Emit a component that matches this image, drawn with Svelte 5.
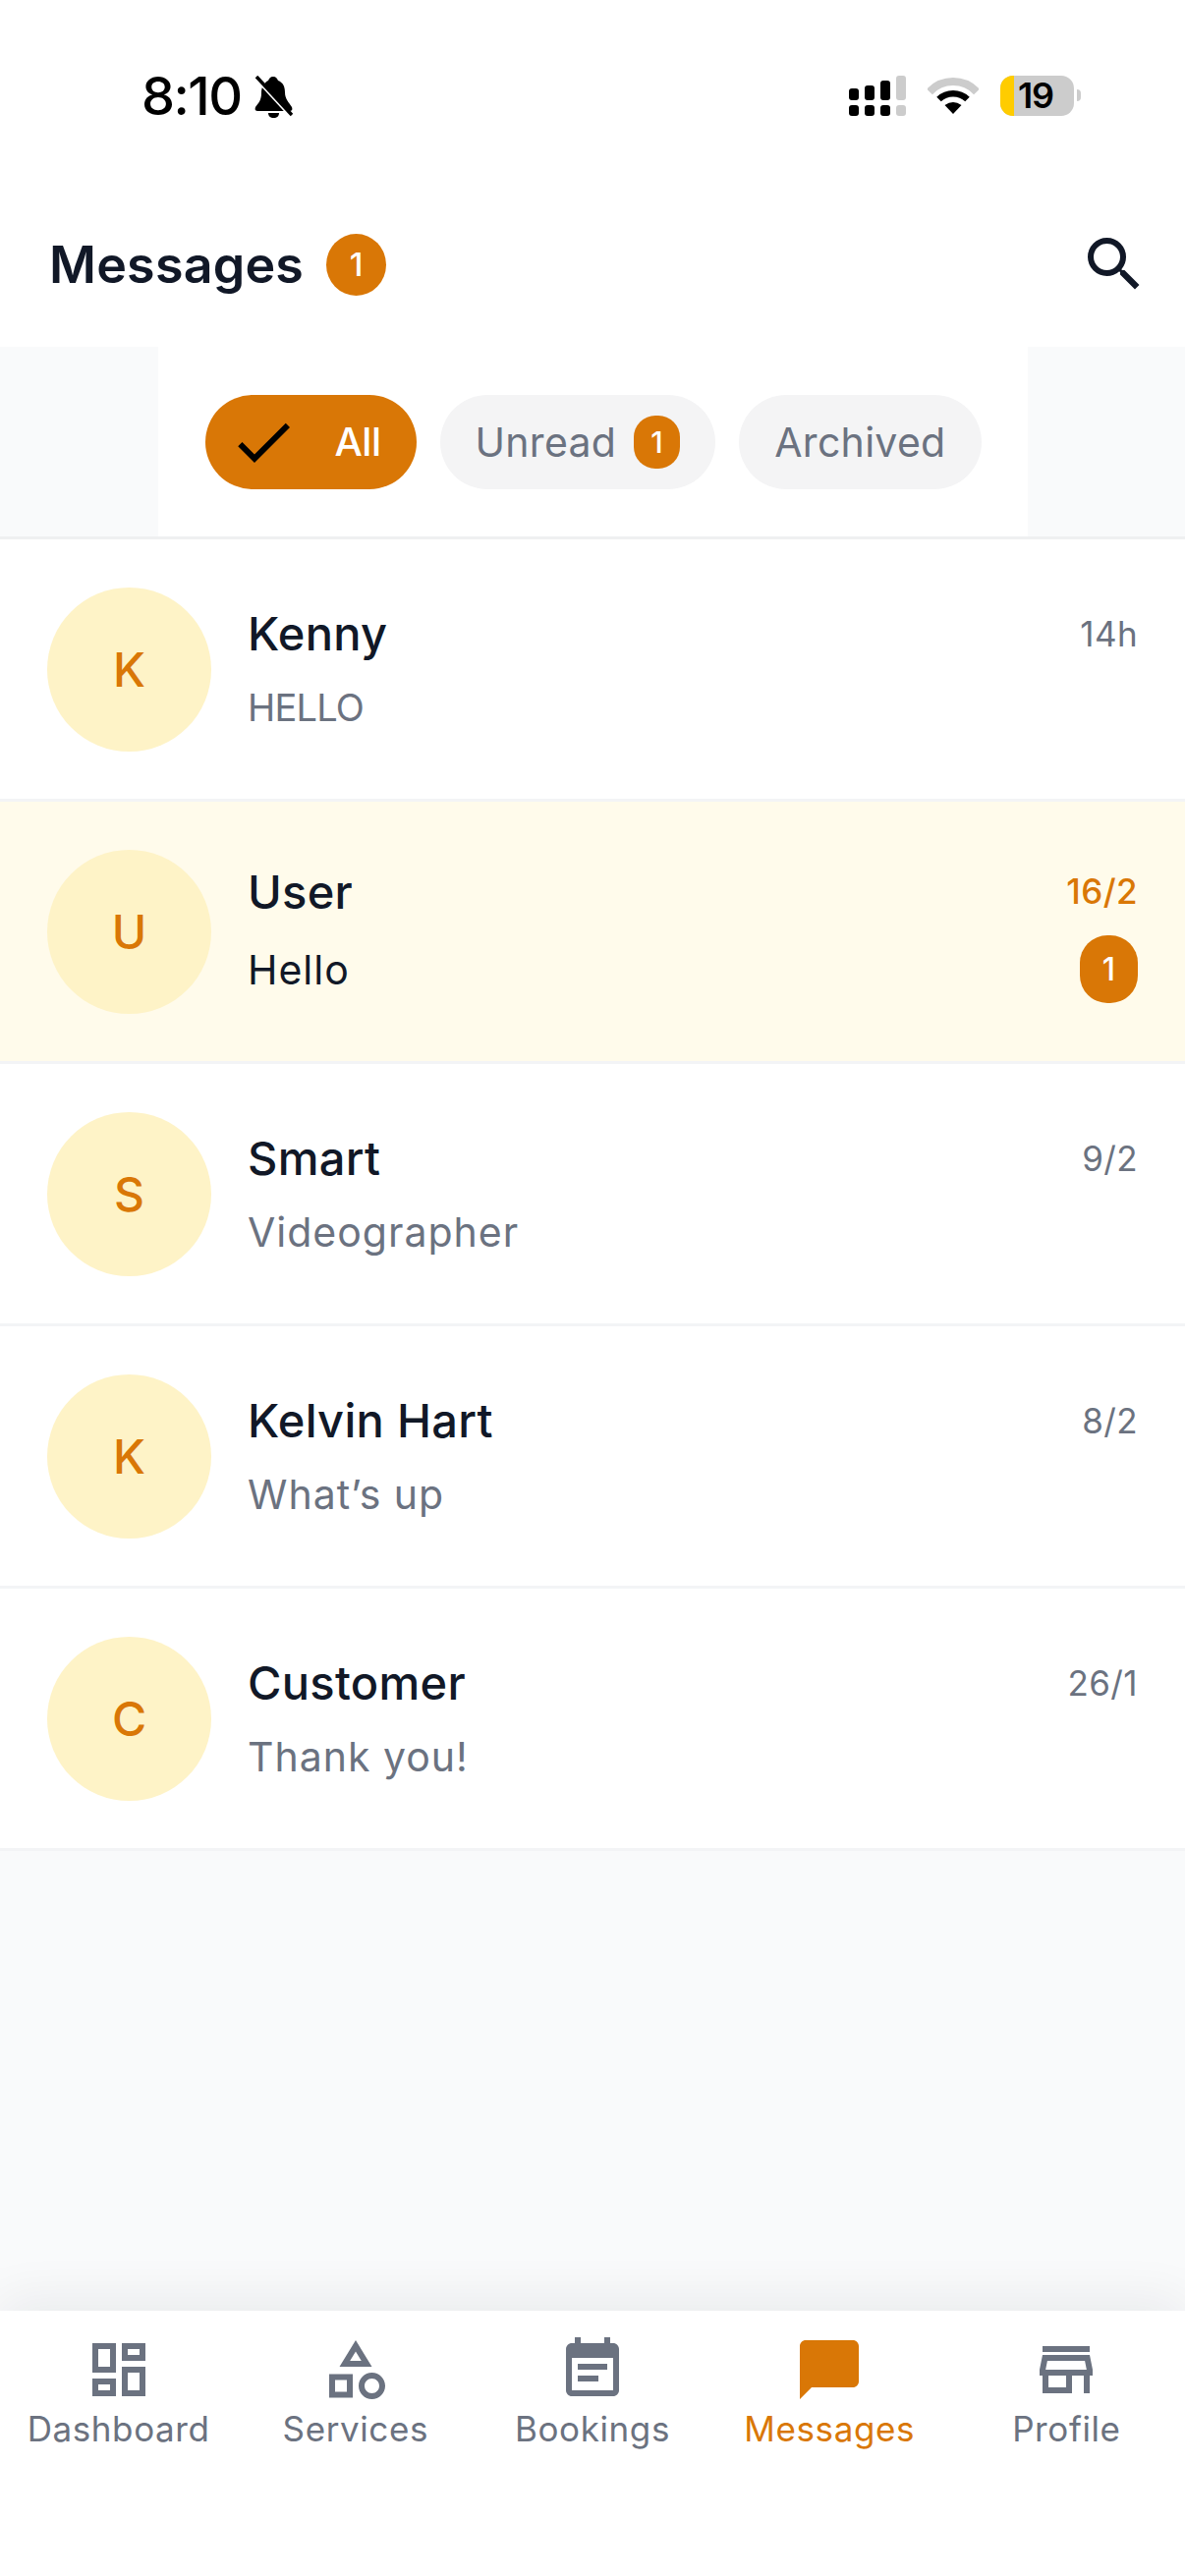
<script>
  const threads = [
    { initial: 'K', name: 'Kenny', preview: 'HELLO', time: '14h', caps: true },
    { initial: 'U', name: 'User', preview: 'Hello', time: '16/2', unread: 1 },
    { initial: 'S', name: 'Smart', preview: 'Videographer', time: '9/2' },
    { initial: 'K', name: 'Kelvin Hart', preview: 'What’s up', time: '8/2' },
    { initial: 'C', name: 'Customer', preview: 'Thank you!', time: '26/1' }
  ];

  const tabs = [
    { label: 'Dashboard', d: 'M19 5v2h-4V5h4M9 5v6H5V5h4m10 8v6h-4v-6h4M9 17v2H5v-2h4M21 3h-8v6h8V3zM11 3H3v10h8V3zm10 8h-8v10h8V11zm-10 4H3v6h8v-6z' },
    { label: 'Services', d: 'M12 2l-5.5 9h11L12 2zm0 3.84L13.93 9h-3.87L12 5.84zM17.5 13c-2.49 0-4.5 2.01-4.5 4.5s2.01 4.5 4.5 4.5 4.5-2.01 4.5-4.5-2.01-4.5-4.5-4.5zm0 7c-1.38 0-2.5-1.12-2.5-2.5s1.12-2.5 2.5-2.5 2.5 1.12 2.5 2.5-1.12 2.5-2.5 2.5zM3 21.5h8v-8H3v8zm2-6h4v4H5v-4z' },
    { label: 'Bookings', d: 'M17 10H7v2h10v-2zm2-7h-1V1h-2v2H8V1H6v2H5c-1.11 0-1.99.9-1.99 2L3 19c0 1.1.89 2 2 2h14c1.1 0 2-.9 2-2V5c0-1.1-.9-2-2-2zm0 16H5V8h14v11zm-5-5H7v2h7v-2z' },
    { label: 'Messages', d: 'M20 2H4c-1.1 0-2 .9-2 2v18l4-4h14c1.1 0 2-.9 2-2V4c0-1.1-.9-2-2-2z', active: true },
    { label: 'Profile', d: 'M18.36 9l.6 3H5.04l.6-3h12.72M20 4H4v2h16V4zm0 3H4l-1 5v2h1v6h10v-6h4v6h2v-6h1v-2l-1-5zM6 18v-4h6v4H6z' }
  ];
</script>

<div class="page">
  <div class="status">
    <div class="clock">
      <span class="time">8:10</span>
      <svg class="bell" viewBox="0 0 39 43" aria-hidden="true">
        <path d="M19 1c3 0 4 2 5 4 5 2 7 6 7 12 0 7 4 10 7 15 1 3 0 4-3 4H4c-3 0-4-1-3-4 3-4 6-7 6-14 0-7 3-11 7-13 1-2 2-4 5-4z" />
        <path d="M14 38h11c0 3-2 5-5.500 5S14 41 14 38z" />
        <path d="M2 3l36 39" class="gap" />
        <path d="M2 1l36 39" class="slash" />
      </svg>
    </div>
    <div class="system">
      <svg class="signal" width="59" height="41" viewBox="0 0 59 41" aria-hidden="true">
        <rect x="0" y="13" width="10" height="12" rx="3" />
        <rect x="16" y="10" width="10" height="15" rx="3" />
        <rect x="32" y="5" width="10" height="20" rx="3" />
        <rect x="48" y="0" width="10" height="25" rx="3" fill="#ccc" />
        <rect x="0" y="30" width="10" height="11" rx="3" />
        <rect x="16" y="30" width="10" height="11" rx="3" />
        <rect x="32" y="30" width="10" height="11" rx="3" />
        <rect x="48" y="30" width="10" height="11" rx="3" fill="#ccc" />
      </svg>
      <svg class="wifi" width="52" height="38" viewBox="0 0 52 38" aria-hidden="true">
        <path d="M2 14.400A33 33 0 0 1 50 14.400" fill="none" stroke="#ccc" stroke-width="8" />
        <path d="M11.500 22A21 21 0 0 1 40.500 22" fill="none" stroke="#000" stroke-width="6.500" />
        <path d="M26 37L17.500 28Q26 22 34.500 28Z" />
      </svg>
      <div class="battery">
        <span class="charge"></span>
        <span class="level">19</span>
      </div>
      <span class="nub"></span>
    </div>
  </div>

  <header class="top">
    <div class="heading">
      <h1>Messages</h1>
      <span class="count">1</span>
    </div>
    <svg class="search" width="72" height="72" viewBox="0 0 24 24" aria-hidden="true">
      <path d="M15.500 14h-.79l-.28-.27A6.471 6.471 0 0 0 16 9.500 6.500 6.500 0 1 0 9.500 16c1.610 0 3.090-.59 4.230-1.570l.27.28v.79l5 4.990L20.490 19l-4.990-5zm-6 0C7.010 14 5 11.990 5 9.500S7.010 5 9.500 5 14 7.010 14 9.500 11.990 14 9.500 14z" />
    </svg>
  </header>

  <div class="filters">
    <div class="strip">
      <button class="pill on">
        <svg width="72" height="72" viewBox="0 0 24 24" aria-hidden="true">
          <path d="M9 16.170L4.830 12l-1.420 1.410L9 19 21 7l-1.410-1.410z" />
        </svg>
        <span>All</span>
      </button>
      <button class="pill">
        <span>Unread</span>
        <span class="mini">1</span>
      </button>
      <button class="pill">
        <span>Archived</span>
      </button>
    </div>
  </div>

  <main class="list">
    {#each threads as t}
      <article class="row" class:fresh={t.unread}>
        <div class="avatar">{t.initial}</div>
        <div class="body">
          <div class="line">
            <span class="name">{t.name}</span>
            <span class="when">{t.time}</span>
          </div>
          <div class="line">
            <span class="preview" class:caps={t.caps}>{t.preview}</span>
            {#if t.unread}<span class="unread">{t.unread}</span>{/if}
          </div>
        </div>
      </article>
    {/each}
  </main>

  <nav class="tabs">
    {#each tabs as tab}
      <div class="tab" class:active={tab.active}>
        <svg width="72" height="72" viewBox="0 0 24 24" aria-hidden="true"><path d={tab.d} /></svg>
        <span>{tab.label}</span>
      </div>
    {/each}
  </nav>
</div>

<style>
  :global(body) {
    margin: 0;
    background: #fff;
  }

  .page {
    width: 1206px;
    height: 2622px;
    display: flex;
    flex-direction: column;
    overflow: hidden;
    font-family: Inter, "Noto Sans", sans-serif;
    color: #111827;
    background: #f9fafb;
  }

  /* system bar */
  .status {
    height: 172px;
    flex: none;
    background: #fff;
    display: flex;
    justify-content: space-between;
    box-sizing: border-box;
    padding: 77px 106px 0 144px;
  }
  .clock {
    display: flex;
    align-items: flex-start;
    gap: 13px;
  }
  .time {
    font-size: 54px;
    line-height: 41px;
    font-weight: 500;
    color: #000;
    letter-spacing: -1.5px;
  }
  .bell {
    width: 39px;
    height: 43px;
  }
  .bell .gap {
    stroke: #fff;
    stroke-width: 4;
    fill: none;
  }
  .bell .slash {
    stroke: #000;
    stroke-width: 3.500;
    fill: none;
  }
  .system {
    display: flex;
    align-items: flex-start;
  }
  .signal {
    margin-right: 21px;
  }
  .wifi {
    margin: 2px 22px 0 0;
  }
  .battery {
    width: 75px;
    height: 41px;
    border-radius: 13px;
    background: #ccc;
    position: relative;
  }
  .charge {
    position: absolute;
    left: 0;
    top: 0;
    bottom: 0;
    width: 14px;
    border-radius: 13px 0 0 13px;
    background: #ffcc00;
  }
  .level {
    position: absolute;
    left: 11px;
    right: 14px;
    top: 0;
    text-align: center;
    font-size: 36px;
    line-height: 41px;
    font-weight: 600;
    color: #000;
    letter-spacing: -1px;
  }
  .nub {
    width: 4px;
    height: 12px;
    margin: 14px 0 0 3px;
    border-radius: 0 6px 6px 0;
    background: #ccc;
  }

  /* title row */
  .top {
    height: 181px;
    flex: none;
    box-sizing: border-box;
    padding: 13px 36px 0 50px;
    display: flex;
    align-items: center;
    justify-content: space-between;
    background: #fff;
  }
  .heading {
    display: flex;
    align-items: center;
    gap: 23px;
  }
  h1 {
    margin: 0;
    font-size: 52px;
    line-height: 72px;
    font-weight: 600;
    letter-spacing: 0.2px;
    position: relative;
    top: 1px;
  }
  .count {
    width: 61px;
    height: 63px;
    border-radius: 50%;
    background: #d97706;
    color: #fff;
    font-size: 33px;
    font-weight: 500;
    display: flex;
    align-items: center;
    justify-content: center;
  }
  .search {
    fill: #111827;
  }

  /* filter pills */
  .filters {
    height: 196px;
    flex: none;
    box-sizing: border-box;
    border-bottom: 3px solid #eff0f1;
    display: flex;
    justify-content: center;
  }
  .strip {
    width: 885px;
    box-sizing: border-box;
    padding: 0 48px;
    background: #fff;
    display: flex;
    align-items: center;
    gap: 24px;
  }
  .pill {
    height: 96px;
    box-sizing: border-box;
    padding: 0 36px;
    border: 0;
    border-radius: 48px;
    background: #f4f4f5;
    color: #6b7280;
    font: inherit;
    font-size: 41px;
    letter-spacing: 0.3px;
    display: flex;
    align-items: center;
    gap: 18px;
  }
  .pill.on {
    padding: 0 36px 0 23px;
    gap: 37px;
    background: #d97706;
    color: #fff;
    font-size: 40px;
    letter-spacing: -0.5px;
    font-weight: 500;
  }
  .pill svg {
    flex: none;
  }
  .mini {
    width: 47px;
    height: 54px;
    border-radius: 22px;
    background: #d97706;
    color: #fff;
    font-size: 30px;
    font-weight: 500;
    display: flex;
    align-items: center;
    justify-content: center;
  }

  /* conversations */
  .list {
    flex: 1;
  }
  .row {
    height: 267px;
    box-sizing: border-box;
    border-bottom: 3px solid #f3f4f6;
    padding: 0 48px;
    background: #fff;
    display: flex;
    align-items: center;
    gap: 37px;
  }
  .row.fresh {
    background: #fffbeb;
  }
  .avatar {
    width: 167px;
    height: 167px;
    flex: none;
    border-radius: 50%;
    background: #fef3c7;
    color: #d97706;
    font-size: 48px;
    font-weight: 500;
    display: flex;
    align-items: center;
    justify-content: center;
  }
  .body {
    flex: 1;
    min-width: 0;
    display: flex;
    flex-direction: column;
    gap: 15px;
    padding-top: 2px;
  }
  .line {
    display: flex;
    align-items: center;
    justify-content: space-between;
    min-height: 60px;
  }
  .name {
    font-size: 47px;
    font-weight: 500;
    letter-spacing: 0.3px;
  }
  .when {
    font-size: 35px;
    color: #6b7280;
    letter-spacing: 0.4px;
  }
  .preview {
    font-size: 41px;
    color: #6b7280;
    letter-spacing: 1px;
  }
  .preview.caps {
    font-size: 38px;
    letter-spacing: -0.8px;
  }
  .fresh .when {
    color: #d97706;
    font-weight: 500;
  }
  .fresh .preview {
    color: #111827;
  }
  .unread {
    width: 59px;
    height: 69px;
    border-radius: 28px;
    background: #d97706;
    color: #fff;
    font-size: 32px;
    font-weight: 500;
    display: flex;
    align-items: center;
    justify-content: center;
  }

  /* bottom navigation */
  .tabs {
    height: 270px;
    flex: none;
    box-sizing: border-box;
    padding-top: 24px;
    background: #fff;
    display: grid;
    grid-template-columns: repeat(5, 1fr);
    box-shadow: 0 -10px 50px rgba(17, 24, 39, 0.07);
    position: relative;
  }
  .tab {
    display: flex;
    flex-direction: column;
    align-items: center;
    color: #6b7280;
    fill: #6b7280;
    font-size: 35px;
    line-height: 42px;
    letter-spacing: 0.6px;
  }
  .tab span {
    margin-top: 3px;
  }
  .tab.active {
    color: #d97706;
    fill: #d97706;
  }
</style>
